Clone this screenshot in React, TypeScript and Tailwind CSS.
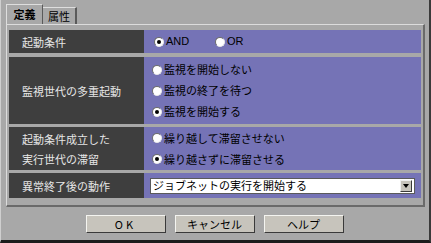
import React from 'react';

const jp = { fontFamily: '"Noto Sans CJK JP", "Liberation Sans", sans-serif' };

function Radio({ checked, label, latin }: { checked?: boolean; label: string; latin?: boolean }) {
  return (
    <div className="flex items-center h-[21px]">
      <span className="relative w-[10px] h-[10px] rounded-full bg-white border border-t-[#6b6b6b] border-l-[#6b6b6b] border-r-[#e8e8e8] border-b-[#e8e8e8] shrink-0">
        {checked && (
          <span className="absolute left-[2px] top-[2px] w-[4px] h-[4px] rounded-full bg-black" />
        )}
      </span>
      <span
        className="ml-[2px] text-[11px] text-black leading-none"
        style={latin ? { fontFamily: '"Liberation Sans", sans-serif' } : undefined}
      >
        {label}
      </span>
    </div>
  );
}

function Row({ height, label, children }: { height: number; label: React.ReactNode; children: React.ReactNode }) {
  return (
    <div className="flex" style={{ height }}>
      <div className="w-[135px] bg-[#3e3e3e] text-[#e6e6e6] text-[11px] flex items-center pl-[13px] leading-[20px]">
        {label}
      </div>
      <div className="flex-1 bg-[#7573b6]">{children}</div>
    </div>
  );
}

function Button({ children, spaced }: { children: React.ReactNode; spaced?: boolean }) {
  return (
    <div
      className={`w-[80px] h-[18px] bg-[#c7c4bc] border border-t-[#f4f4f0] border-l-[#f4f4f0] border-r-[#3a3a3a] border-b-[#3a3a3a] flex items-center justify-center text-[11px] text-black ${spaced ? 'tracking-[3px]' : ''}`}
    >
      {children}
    </div>
  );
}

export default function App() {
  return (
    <div
      className="w-[431px] h-[243px] bg-[#a8a8a8] border-l border-l-[#cfcfcf] border-r-2 border-r-[#3a3a3a] border-b-[3px] border-b-[#1c1c1c] flex flex-col"
      style={jp}
    >
      {/* tabs */}
      <div className="flex items-end pl-[5px] h-[24px]">
        <div className="w-[37px] h-[20px] border-t border-l border-t-[#dedede] border-l-[#dedede] border-r border-r-[#5a5a5a] flex items-center justify-center text-[11px] font-bold text-black">
          定義
        </div>
        <div className="w-[34px] h-[17px] border-t border-t-[#dedede] border-r-2 border-r-[#5a5a5a] flex items-center justify-center text-[11px] text-black">
          属性
        </div>
      </div>

      {/* panel */}
      <div className="ml-[5px] w-[419px] h-[183px] border-t border-l border-t-[#dcdcdc] border-l-[#dcdcdc] border-r-2 border-b-2 border-r-[#6a6a6a] border-b-[#6a6a6a] pt-[5px] pl-[2px] pr-[2px] flex flex-col">
        <Row height={23} label="起動条件">
          <div className="flex items-center h-full pl-[10px]">
            <div className="w-[61px]">
              <Radio checked label="AND" latin />
            </div>
            <Radio label="OR" latin />
          </div>
        </Row>
        <div className="h-[4px]" />
        <Row height={67} label="監視世代の多重起動">
          <div className="flex flex-col justify-center h-full pl-[8px]">
            <Radio label="監視を開始しない" />
            <Radio label="監視の終了を待つ" />
            <Radio checked label="監視を開始する" />
          </div>
        </Row>
        <div className="h-[3px]" />
        <Row
          height={43}
          label={
            <div>
              <div>起動条件成立した</div>
              <div>実行世代の滞留</div>
            </div>
          }
        >
          <div className="flex flex-col justify-center h-full pl-[8px]">
            <Radio label="繰り越して滞留させない" />
            <Radio checked label="繰り越さずに滞留させる" />
          </div>
        </Row>
        <div className="h-[3px]" />
        <Row height={25} label="異常終了後の動作">
          <div className="flex items-center h-full pl-[6px] pr-[6px]">
            <div className="flex-1 h-[16px] bg-white border border-[#5a5a5a] flex items-center pl-[2px] pr-[2px]">
              <span className="flex-1 text-[11px] text-black leading-none">ジョブネットの実行を開始する</span>
              <span className="w-[12px] h-[12px] bg-[#c7c4bc] border border-t-[#f0f0f0] border-l-[#f0f0f0] border-r-[#3a3a3a] border-b-[#3a3a3a] flex items-center justify-center">
                <svg width="6" height="4" viewBox="0 0 6 4">
                  <path d="M0 0 H6 L3 4 Z" fill="#000" />
                </svg>
              </span>
            </div>
          </div>
        </Row>
      </div>

      {/* buttons */}
      <div className="flex justify-center gap-[9px] mt-[8px] pr-[1px]">
        <Button spaced>OK</Button>
        <Button>キャンセル</Button>
        <Button>ヘルプ</Button>
      </div>
    </div>
  );
}
